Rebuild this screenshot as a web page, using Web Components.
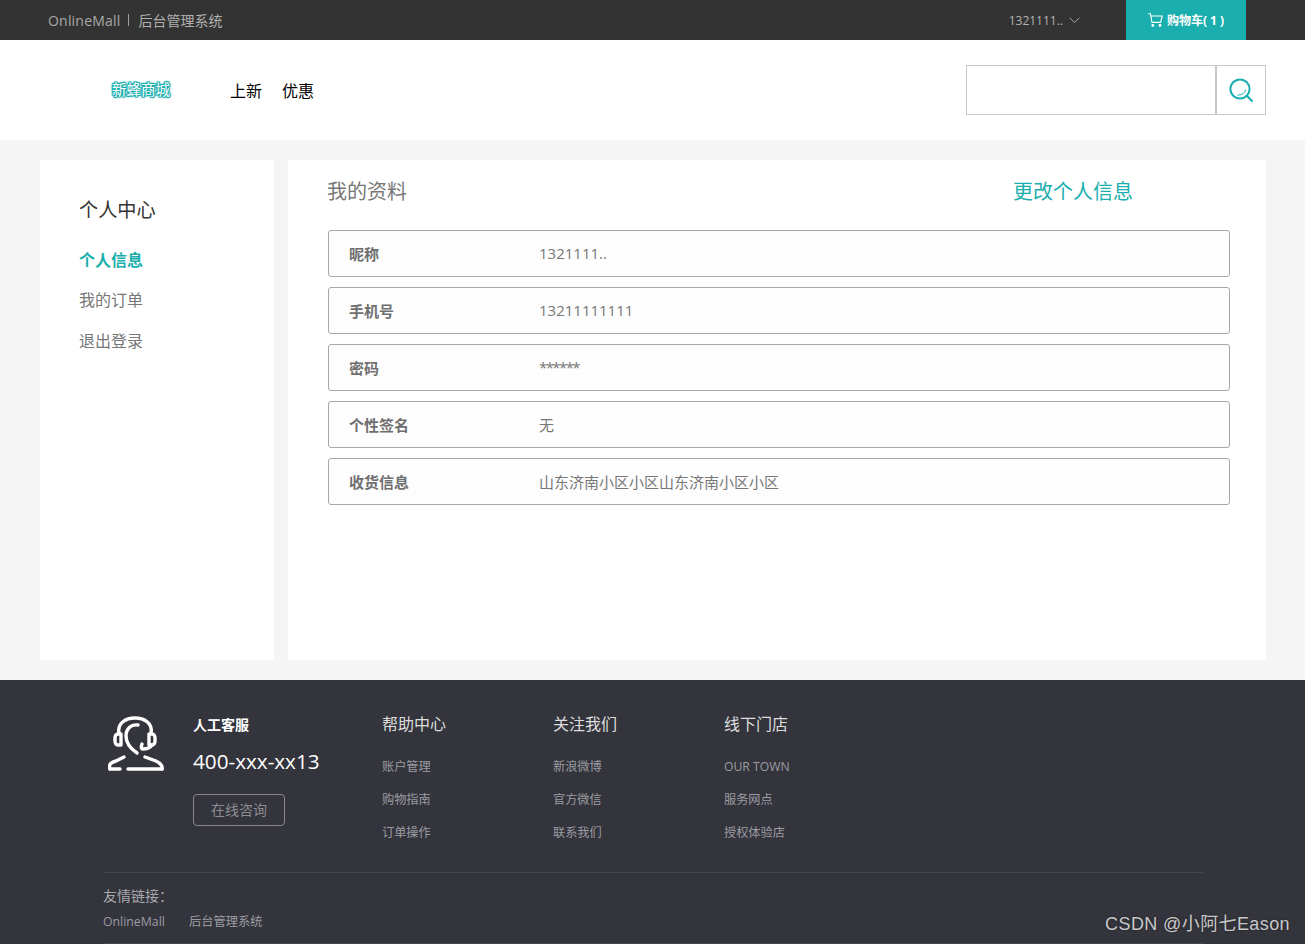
<!DOCTYPE html>
<html lang="zh">
<head>
<meta charset="utf-8">
<title>OnlineMall</title>
<style>
html, body {
  margin: 0;
  padding: 0;
  background: #f5f5f5;
  font-family: "Open Sans", "Noto Sans CJK SC", sans-serif;
}
</style>
</head>
<body>
<mall-topbar></mall-topbar>
<mall-header></mall-header>
<mall-content>
  <mall-sidebar></mall-sidebar>
  <mall-profile>
    <mall-row label="昵称">1321111..</mall-row>
    <mall-row label="手机号">13211111111</mall-row>
    <mall-row label="密码"><span style="letter-spacing:-1.6px">******</span></mall-row>
    <mall-row label="个性签名">无</mall-row>
    <mall-row label="收货信息">山东济南小区小区山东济南小区小区</mall-row>
  </mall-profile>
</mall-content>
<mall-footer>
  <mall-footcol title="帮助中心"><span>账户管理</span><span>购物指南</span><span>订单操作</span></mall-footcol>
  <mall-footcol title="关注我们"><span>新浪微博</span><span>官方微信</span><span>联系我们</span></mall-footcol>
  <mall-footcol title="线下门店"><span>OUR TOWN</span><span>服务网点</span><span>授权体验店</span></mall-footcol>
</mall-footer>
<script>
function shadow(el, html) {
  el.attachShadow({ mode: 'open' });
  el.shadowRoot.innerHTML = html;
}

customElements.define('mall-topbar', class extends HTMLElement {
  constructor() {
    super();
    shadow(this, `
<style>
:host { display: flex; height: 40px; background: #333; padding: 0 59px 0 48px; align-items: center; color: #b0b0b0; font-size: 14px; }
.brand { color: #a9a9a9; letter-spacing: .2px; }
.sep { width: 1px; height: 12px; background: #a0a0a0; margin: 0 9px 0 8px; }
.user { margin-left: auto; font-size: 12px; display: flex; align-items: center; gap: 6px; margin-right: 46px; color: #b4b4b4; }
.cart { width: 120px; height: 40px; background: #1baeae; color: #fff; font-size: 12px; font-weight: 700; display: flex; align-items: center; justify-content: center; gap: 4px; }
svg { display: block; }
</style>
<span class="brand">OnlineMall</span><span class="sep"></span><span>后台管理系统</span>
<span class="user">1321111..
  <svg width="11" height="7" viewBox="0 0 11 7" fill="none" stroke="#a8a8a8" stroke-width="1"><path d="M.7.8 5.5 5.6 10.3.8"/></svg>
</span>
<span class="cart">
  <svg width="15" height="14" viewBox="0 0 15 14" fill="none" stroke="#fff" stroke-width="1.1"><path d="M.2.7H2.4L4 9.4H12.6L14.2 3H2.9"/><circle cx="4.8" cy="12.4" r=".9" fill="#fff"/><circle cx="12" cy="12.4" r=".9" fill="#fff"/></svg>
  <span>购物车( 1 )</span>
</span>`);
  }
});

customElements.define('mall-header', class extends HTMLElement {
  constructor() {
    super();
    shadow(this, `
<style>
:host { display: flex; height: 100px; background: #fff; align-items: center; padding: 0 39px 0 112px; }
.logo { width: 118px; font-size: 14.5px; color: #fff; margin-top: -4px; text-shadow: 1px 0 0 #1baeae, -1px 0 0 #1baeae, 0 1px 0 #1baeae, 0 -1px 0 #1baeae, 1px 1px 1px #1baeae, -1px -1px 1px #1baeae, 1px -1px 1px #1baeae, -1px 1px 1px #1baeae, 0 0 3px #1baeae; }
nav { display: flex; gap: 20px; font-size: 16px; color: #000; }
.search { margin-left: auto; display: flex; height: 50px; }
.input { width: 248px; border: 1px solid #c8c8c8; background: #fff; }
.btn { width: 48px; border: 1px solid #c8c8c8; display: flex; align-items: center; justify-content: center; }
</style>
<span class="logo">新蜂商城</span>
<nav><span>上新</span><span>优惠</span></nav>
<div class="search">
  <div class="input"></div>
  <div class="btn">
    <svg width="24" height="25" viewBox="0 0 24 25" fill="none" stroke="#1baeae" stroke-width="2"><circle cx="11" cy="11" r="9.6"/><path d="M17.8 17.8 23 23" stroke-linecap="round"/><path d="M16.5 11.5Q16 16.8 8.5 17.2" stroke-width="1"/></svg>
  </div>
</div>`);
  }
});

customElements.define('mall-content', class extends HTMLElement {
  constructor() {
    super();
    shadow(this, `
<style>
:host { display: flex; gap: 14px; padding: 20px 39px 20px 40px; height: 500px; background: #f5f5f5; }
</style>
<slot></slot>`);
  }
});

customElements.define('mall-sidebar', class extends HTMLElement {
  constructor() {
    super();
    shadow(this, `
<style>
:host { display: flex; flex-direction: column; width: 195px; padding: 36px 0 0 39px; background: #fff; color: #777; font-size: 16px; }
h2 { margin: 0 0 15.5px; font-size: 19.2px; font-weight: 400; line-height: 28px; color: #333; }
div { height: 40.5px; line-height: 40.5px; }
.on { color: #1baeae; font-weight: 700; }
</style>
<h2>个人中心</h2>
<div class="on">个人信息</div>
<div>我的订单</div>
<div>退出登录</div>`);
  }
});

customElements.define('mall-profile', class extends HTMLElement {
  constructor() {
    super();
    shadow(this, `
<style>
:host { display: block; flex: 1; background: #fff; padding: 15px 36px 0 40px; }
.head { display: flex; height: 30px; align-items: center; margin: 0 0 25px -1px; font-size: 20px; }
.title { color: #777; }
.edit { margin-left: 606px; color: #1baeae; }
.rows { display: flex; flex-direction: column; gap: 10px; }
</style>
<div class="head"><span class="title">我的资料</span><span class="edit">更改个人信息</span></div>
<div class="rows"><slot></slot></div>`);
  }
});

customElements.define('mall-row', class extends HTMLElement {
  constructor() {
    super();
    shadow(this, `
<style>
:host { display: flex; height: 45px; align-items: center; box-sizing: content-box; border: 1px solid #a8a8a8; border-radius: 3px; background: #fdfdfd; padding-left: 20px; font-size: 15px; color: #777; }
b { width: 190px; font-weight: 700; color: #6f6f6f; }
span { margin-top: -1px; }
</style>
<b></b><span><slot></slot></span>`);
    this.shadowRoot.querySelector('b').textContent = this.getAttribute('label');
  }
});

customElements.define('mall-footcol', class extends HTMLElement {
  constructor() {
    super();
    shadow(this, `
<style>
:host { display: block; width: 171px; }
h4 { margin: -1px 0 14px; font-size: 16px; font-weight: 400; line-height: 24px; color: #ddd; }
.list { display: flex; flex-direction: column; font-size: 12.2px; color: #9c9ca2; }
::slotted(span) { height: 33px; line-height: 33px; }
</style>
<h4></h4>
<div class="list"><slot></slot></div>`);
    this.shadowRoot.querySelector('h4').textContent = this.getAttribute('title');
  }
});

customElements.define('mall-footer', class extends HTMLElement {
  constructor() {
    super();
    shadow(this, `
<style>
:host { display: block; position: relative; box-sizing: border-box; height: 264px; background: #33343c; padding: 33px 102px 0 103px; }
.top { display: flex; height: 159px; border-bottom: 1px solid #45464e; }
.icon { width: 90px; }
.icon svg { display: block; margin: 3px 0 0 5px; }
.service { width: 189px; color: #fff; }
.service h4 { margin: 0; font-size: 14px; font-weight: 700; line-height: 24px; }
.tel { font-size: 20.7px; line-height: 28px; margin-top: 10px; }
.ask { box-sizing: border-box; display: flex; width: 92px; height: 32px; margin-top: 19px; padding-bottom: 2px; align-items: center; justify-content: center; border: 1px solid #85858a; border-radius: 4px; color: #8c8c92; font-size: 14px; }
.links { height: 71px; box-sizing: border-box; border-bottom: 1px solid #45464e; color: #a8a8ae; }
.links h5 { margin: 0; padding-top: 13px; font-size: 14px; font-weight: 400; line-height: 20px; }
.links div { display: flex; gap: 24px; font-size: 12.3px; line-height: 20px; margin-top: 6px; color: #9c9ca2; }
.mark { position: absolute; right: 15px; bottom: 9px; font: 18px "Liberation Sans", "Noto Sans CJK SC", sans-serif; letter-spacing: .4px; color: #c8c8ca; text-shadow: 0 0 2px #222; }
</style>
<div class="top">
  <div class="icon">
    <svg width="56" height="55" viewBox="0 0 56 55" fill="none" stroke="#fff" stroke-width="3.4" stroke-linecap="round" stroke-linejoin="round">
      <path d="M11 17C9 7 18 2 27 2S45 7 43 17"/>
      <path d="M10 18H13V29H10C8 29 7 27 7 25V22C7 20 8 18 10 18Z"/>
      <path d="M41 18H44C46 18 47 20 47 22V25C47 27 46 29 44 29H41Z"/>
      <path d="M30 9C23 8 18 13 18 20 18 27 23 33 29 37"/>
      <path d="M34 28C33 31 33 33 35 33 38 33 42 32 44 29"/>
      <path d="M2 53C0 48 4 46 8 45L16 41"/>
      <path d="M2 53H12"/>
      <path d="M20 53H54"/>
      <path d="M37 41 48 45C52 47 55 49 54 53"/>
    </svg>
  </div>
  <div class="service">
    <h4>人工客服</h4>
    <div class="tel">400-xxx-xx13</div>
    <div class="ask">在线咨询</div>
  </div>
  <slot></slot>
</div>
<div class="links">
  <h5>友情链接：</h5>
  <div><span>OnlineMall</span><span>后台管理系统</span></div>
</div>
<div class="mark">CSDN @小阿七Eason</div>`);
  }
});
</script>
</body>
</html>
